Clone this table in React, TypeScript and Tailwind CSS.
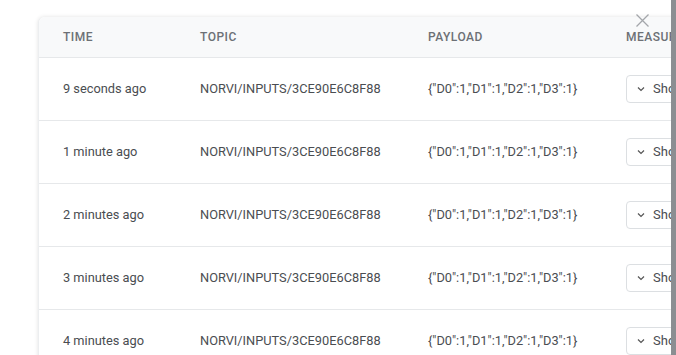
import React from 'react';

const rows = ['9 seconds ago', '1 minute ago', '2 minutes ago', '3 minutes ago', '4 minutes ago'];

const Chevron = () => (
  <svg width="10" height="10" viewBox="0 0 10 10" fill="none" stroke="#555" strokeWidth="1.2">
    <path d="M2 3.5 L5 6.5 L8 3.5" />
  </svg>
);

const App: React.FC = () => {
  return (
    <div className="relative w-[676px] h-[355px] overflow-hidden bg-white flex font-['Roboto',sans-serif]">
      <div className="flex-1 pt-[17px] pl-[38px] overflow-hidden">
        <div className="w-[700px] bg-white rounded-tl-[6px] shadow-[0_0_4px_rgba(0,0,0,0.12)] border-l border-[#eceef0]">
          {/* header */}
          <div className="grid grid-cols-[137px_228px_198px_200px] pl-[24px] h-[41px] items-center bg-[#f8f9fa] border-b border-[#e6e8ea] rounded-tl-[6px]">
            <span className="text-[12px] font-medium tracking-[0.04em] text-[#6c7075]">TIME</span>
            <span className="text-[12px] font-medium tracking-[0.04em] text-[#6c7075]">TOPIC</span>
            <span className="text-[12px] font-medium tracking-[0.04em] text-[#6c7075]">PAYLOAD</span>
            <span className="text-[12px] font-medium tracking-[0.04em] text-[#6c7075]">MEASUREMENTS</span>
          </div>
          {rows.map((t, i) => (
            <div
              key={i}
              className="grid grid-cols-[137px_228px_198px_200px] pl-[24px] h-[63px] items-center border-b border-[#e6e8ea]"
            >
              <span className="text-[12.8px] text-[#4a4d51]">{t}</span>
              <span className="text-[12.8px] text-[#4a4d51]">NORVI/INPUTS/3CE90E6C8F88</span>
              <span className="text-[12.8px] text-[#4a4d51]">{'{"D0":1,"D1":1,"D2":1,"D3":1}'}</span>
              <div>
                <button className="flex items-center gap-[7px] h-[28px] pl-[9px] pr-[12px] border border-[#dcdfe2] rounded-[4px] bg-white text-[13px] text-[#4a4d51]">
                  <Chevron />
                  <span>Show measurements</span>
                </button>
              </div>
            </div>
          ))}
        </div>
      </div>
      <div className="w-[5px] h-full bg-[#8b8e92]" />
      <button className="absolute left-[635px] top-[13px] w-[15px] h-[15px] flex items-center justify-center">
        <svg width="15" height="15" viewBox="0 0 15 15" stroke="#a3a6aa" strokeWidth="1.3">
          <path d="M1.5 1.5 L13.5 13.5 M13.5 1.5 L1.5 13.5" />
        </svg>
      </button>
    </div>
  );
};

export default App;
